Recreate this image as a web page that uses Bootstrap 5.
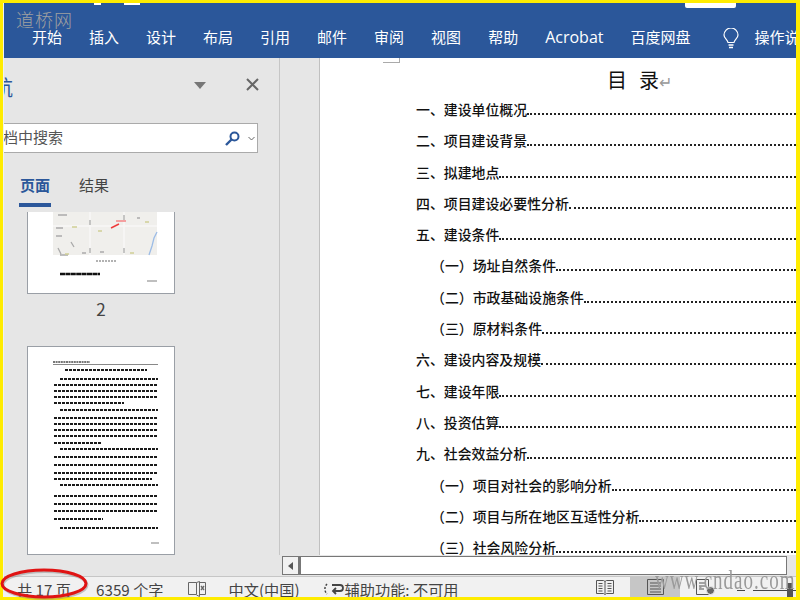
<!DOCTYPE html>
<html lang="zh-CN">
<head>
<meta charset="utf-8">
<title>目录</title>
<link href="https://cdn.jsdelivr.net/npm/bootstrap@5.3.0/dist/css/bootstrap.min.css" rel="stylesheet">
<style>
html,body{height:100%;margin:0;overflow:hidden}
body{background:#ffec00;font-family:"Noto Sans CJK SC","Liberation Sans",sans-serif;color:#444}
.shell{width:800px;height:600px;padding:3px 4px 3px 3px;position:relative;overflow:hidden}
.window{height:594px;width:793px;border-left:1px solid #f1f1f1;background:#e6e6e6}
.ribbon{height:55px;background:#2b579a;position:relative;flex:none}
.tabsrow{height:55px;padding:22px 0 0 28px;gap:27px;color:#fff;font-size:15px;line-height:24px;white-space:nowrap;overflow:hidden}
.tabsrow .latin{font-family:"Open Sans",sans-serif;font-size:16px}
.tellme{margin-left:6px;gap:15px}
.tellme svg{margin-top:3px}
.qmark{position:absolute;background:#fff;top:0}
.q1{left:90px;width:7px;height:2px}
.q2{left:120px;width:16px;height:2px}
.q3{left:681px;width:51px;height:5px;border-radius:0 0 2px 2px}
.workarea{height:497px;flex:none}
.navpane{width:276px;flex:none;border-right:1px solid #c6c6c6;overflow:hidden;background:#e6e6e6}
.panehead{height:47px;padding:13px 0 0 0}
.panetitle{font-size:21px;line-height:30px;color:#2b579a;margin-left:-33px;white-space:nowrap}
.panetools{margin-left:auto;gap:40px;padding:7px 20px 0 0}
.arrowdn{width:0;height:0;border-left:6px solid transparent;border-right:6px solid transparent;border-top:7px solid #777;margin-top:4px}
.searchbar{height:30px;width:254px;margin-top:18px;background:#fff;border:1px solid #aaa;border-left:0;font-size:15px;line-height:28px;overflow:hidden;color:#555;padding-right:1px}
.searchbar span{margin-left:-16px;margin-top:-2px;white-space:nowrap}
.searchicons{margin-left:auto;gap:8px;padding-right:1px}
.panetabs{height:59px;padding:21px 0 0 15px;font-size:15px;line-height:22px;gap:27px}
.ptab{height:33px;width:32px;text-align:center}
.ptab.on{color:#2b579a;font-weight:700;border-bottom:4px solid #2b579a}
.thumbs{height:343px;overflow:hidden;padding-left:23px}
.thumbbox{display:block;background:#fff;border:1px solid #9a9fa6;box-sizing:content-box;filter:blur(.35px)}
.t1{height:81px;border-top:0;width:146px}
.t2{height:207px;width:146px;margin-top:26px}
.pnum{width:148px;text-align:center;font-size:17px;line-height:22px;margin-top:4px;color:#444}
.gutter{width:39px;flex:none;background:#e6e6e6}
.docpane{flex:1;min-width:0;background:#fff;border-left:1px solid #c0c0c0;position:relative;overflow:hidden}
.cropv{position:absolute;left:79px;top:0;width:1px;height:5px;background:#aaa}
.croph{position:absolute;left:63px;top:4px;width:17px;height:1px;background:#aaa}
.doctitle{font-size:20px;font-weight:400;line-height:28px;color:#111;padding:8px 0 0 287px;height:36px;white-space:nowrap;margin-bottom:0}
.doctitle b{font-weight:400;margin-right:12px}
.doctitle i{font-style:normal;color:#999;font-size:16px}
.toc{list-style:none;margin:0;padding:0 0 0 96px}
.toc li{height:31.3px;font-size:13.9px;line-height:20px;color:#111;font-weight:500;white-space:nowrap;padding-top:5px;display:flex}
.toc li.sub{padding-left:15px}
.leader{flex:1;border-bottom:2px dotted #222;height:16px}
.hscroll{height:21px;flex:none;padding:1px 9px 0 2px;background:#e6e6e6}
.hbar{height:19px;background:#fff;border:1px solid #777;margin-left:276px;display:flex}
.hbtn{width:18px;border-right:3px solid #777;display:flex;align-items:center;justify-content:center;background:#f1f1f1}
.hbtn b{width:0;height:0;border-top:4px solid transparent;border-bottom:4px solid transparent;border-right:5px solid #555}
.statusbar{height:21px;flex:none;background:#f1f1f1;border-top:1px solid #c6c6c6;font-size:15.2px;line-height:20px;color:#444;padding:4px 0 0 13px;white-space:nowrap;overflow:hidden}
.statusbar span{flex:none}
.s2{margin-left:25px}.s3{margin-left:24px}.s4{margin-left:23px}.s5{margin-left:24px}.s6{margin-left:0}
.viewbtns{margin-left:auto;margin-top:-4px;display:flex;height:20px}
.vb{width:50px;display:flex;justify-content:center;align-items:center}
.vb.on{background:#c6c6c6}
.zoomctl{width:66px;position:relative}
.zminus{position:absolute;left:7px;top:13px;width:8px;height:1px;background:#444}
.zline{position:absolute;left:23px;right:0;top:13px;height:1px;background:#444}
.zthumb{position:absolute;left:57px;top:6px;width:6px;height:14px;background:#555}
.mark-cn{position:absolute;left:16px;top:6px;font-size:18px;letter-spacing:1px;line-height:26px;color:#a0a0a0;font-weight:300}
.mark-en{position:absolute;left:655px;top:563px;font-family:"Liberation Serif",serif;font-size:19px;line-height:24px;letter-spacing:1px;color:#9a9a9a;transform-origin:0 0;transform:scaleY(1.45);white-space:nowrap}
.ring{position:absolute;left:0;top:568px}
</style>
</head>
<body>
<div class="shell">
  <div class="window d-flex flex-column">
    <header class="ribbon">
      <div class="qmark q1"></div><div class="qmark q2"></div><div class="qmark q3"></div>
      <nav class="tabsrow d-flex">
        <span>开始</span><span>插入</span><span>设计</span><span>布局</span><span>引用</span><span>邮件</span><span>审阅</span><span>视图</span><span>帮助</span><span class="latin">Acrobat</span><span>百度网盘</span>
        <span class="tellme d-flex">
          <svg width="16" height="21" viewBox="0 0 16 21" fill="none" stroke="#fff" stroke-width="1.2"><path d="M5 14.5C4.5 11.5 1 10.500 1 7a7 7 0 0 1 14 0c0 3.500-3.500 4.500-4 7.500z"/><path d="M5.500 17h5M6 19.500h4" stroke-width="1.600"/></svg>
          <span>操作说明搜索</span>
        </span>
      </nav>
    </header>
    <div class="workarea d-flex">
      <aside class="navpane">
        <div class="panehead d-flex">
          <span class="panetitle">导航</span>
          <div class="panetools d-flex">
            <div class="arrowdn"></div>
            <svg width="13" height="13" viewBox="0 0 13 13" stroke="#666" stroke-width="2"><path d="M1 1l11 11M12 1L1 12"/></svg>
          </div>
        </div>
        <div class="searchbar d-flex align-items-center">
          <span>文档中搜索</span>
          <div class="searchicons d-flex align-items-center">
            <svg width="15" height="15" viewBox="0 0 15 15" fill="none" stroke="#2b579a"><circle cx="9.500" cy="5.500" r="4" stroke-width="2"/><path d="M6.500 8.500L1 14" stroke-width="2.400"/></svg>
            <svg width="7" height="5" viewBox="0 0 7 5" fill="none" stroke="#666"><path d="M.5 1l3 3 3-3"/></svg>
          </div>
        </div>
        <div class="panetabs d-flex">
          <div class="ptab on">页面</div>
          <div class="ptab">结果</div>
        </div>
        <div class="thumbs">
          <svg class="thumbbox t1" viewBox="0 0 146 81">
            <rect x="25" y="0" width="104" height="43" fill="#f0efec"/>
            <path d="M25 14H129M62 0V43M96 0V43" stroke="#f8f8f6" stroke-width="1.500"/>
            <path d="M83 16l8-4" stroke="#ee3b3b" stroke-width="1.500"/>
            <path d="M88 9h10" stroke="#f4a0a0" stroke-width="2"/>
            <path d="M129 20l-3 6-2 8-3 9" stroke="#9cbce6" stroke-width="1.300" fill="none"/>
            <path d="M30 3h9M28 16h7M28 24h6M32 43h8M54 41h4M72 40h4M96 3v5M96 36v5M109 6h3M62 8v5M62 36v5M43 30l3 5M30 36l3 6" stroke="#aaa" stroke-width="1.300"/>
            <path d="M44 15h5M37 42h4M70 19h4M117 10h4M102 41h4" stroke="#cfcf95" stroke-width="1.300"/>
            <path d="M68 49h20" stroke="#999" stroke-width="1.500" stroke-dasharray="2 1"/>
            <path d="M32 62h40" stroke="#111" stroke-width="2.400" stroke-dasharray="5 .4"/>
            <path d="M119 69h10" stroke="#aaa" stroke-width="1.500"/>
          </svg>
          <div class="pnum">2</div>
          <svg class="thumbbox t2" viewBox="0 0 146 207">
            <path d="M25 15H62" stroke="#777" stroke-width="2" stroke-dasharray="2 .6"/>
            <path d="M25 17.500H130" stroke="#888" stroke-width="1"/>
            <g stroke="#1a1a1a" stroke-width="2.200" stroke-dasharray="3 1">
              <path d="M37 23H119M32 32H130M26 38H130M26 44H130M26 50H130M26 56H96M32 63H130M26 71H130M26 77H130M26 83H130M26 89H130M26 96H74"/>
              <path d="M32 102H130M26 110H130M26 118H130M26 126H130M26 132H124M32 138H130M26 149H130M26 157H130M26 164H130M26 172H75M32 181H130"/>
            </g>
            <path d="M123 196h8" stroke="#aaa" stroke-width="1.500"/>
          </svg>
        </div>
      </aside>
      <div class="gutter"></div>
      <main class="docpane">
        <div class="cropv"></div><div class="croph"></div>
        <h1 class="doctitle"><b>目</b>录<i>↵</i></h1>
        <ul class="toc">
          <li><span>一、建设单位概况</span><div class="leader"></div></li>
          <li><span>二、项目建设背景</span><div class="leader"></div></li>
          <li><span>三、拟建地点</span><div class="leader"></div></li>
          <li><span>四、项目建设必要性分析</span><div class="leader"></div></li>
          <li><span>五、建设条件</span><div class="leader"></div></li>
          <li class="sub"><span>（一）场址自然条件</span><div class="leader"></div></li>
          <li class="sub"><span>（二）市政基础设施条件</span><div class="leader"></div></li>
          <li class="sub"><span>（三）原材料条件</span><div class="leader"></div></li>
          <li><span>六、建设内容及规模</span><div class="leader"></div></li>
          <li><span>七、建设年限</span><div class="leader"></div></li>
          <li><span>八、投资估算</span><div class="leader"></div></li>
          <li><span>九、社会效益分析</span><div class="leader"></div></li>
          <li class="sub"><span>（一）项目对社会的影响分析</span><div class="leader"></div></li>
          <li class="sub"><span>（二）项目与所在地区互适性分析</span><div class="leader"></div></li>
          <li class="sub"><span>（三）社会风险分析</span><div class="leader"></div></li>
        </ul>
      </main>
    </div>
    <div class="hscroll"><div class="hbar"><div class="hbtn"><b></b></div></div></div>
    <footer class="statusbar d-flex align-items-center">
      <span>共 17 页</span>
      <span class="s2">6359 个字</span>
      <span class="s3 d-flex"><svg width="18" height="17" viewBox="0 0 18 17" fill="none" stroke="#666"><path d="M8.500 1.500h-8v12h8zM8.500 1.500l3-1v15l-3-1.500M11.500 1.500h6v12h-6"/><path d="M13 5l3 4M16 5l-3 4" stroke-width="1.300"/></svg></span>
      <span class="s4">中文(中国)</span>
      <span class="s5 d-flex"><svg width="21" height="17" viewBox="0 0 21 17" fill="none" stroke="#444" stroke-width="1.500"><path d="M3 3a7 7 0 0 0 0 10" stroke-dasharray="2 1.500"/><path d="M8 4h8a3 3 0 0 1 0 6h-6M12 13l-3-3 3-3" stroke-width="1.800"/></svg></span>
      <span class="s6">辅助功能: 不可用</span>
      <div class="viewbtns">
        <div class="vb"><svg width="18" height="15" viewBox="0 0 18 15" fill="none" stroke="#555"><path d="M.5.500h7l1.500 1 1.500-1h7v13h-7l-1.500 1-1.500-1h-7zM9 1.500v12M2.500 3.500h4M2.500 6h4M2.500 8.500h4M2.500 11h4M11.500 3.500h4M11.500 6h4M11.500 8.500h4M11.500 11h4"/></svg></div>
        <div class="vb on"><svg width="17" height="16" viewBox="0 0 17 16" fill="none" stroke="#555"><path d="M.5.500h16v15h-16zM3 4h11M3 7h11M3 10h11M3 13h11"/></svg></div>
        <div class="vb"><svg width="19" height="16" viewBox="0 0 19 16" fill="none" stroke="#555"><path d="M.5.500h12v15h-12zM3 4h7M3 7h7M3 10h5"/><circle cx="14.500" cy="11.500" r="4" fill="#666" stroke="#f1f1f1"/></svg></div>
        <div class="zoomctl"><div class="zminus"></div><div class="zline"></div><div class="zthumb"></div></div>
      </div>
    </footer>
  </div>
  <div class="mark-cn">道桥网</div>
  <div class="mark-en">www.cndao.com</div>
  <svg class="ring" width="96" height="32" viewBox="0 0 96 32" fill="none">
    <ellipse cx="45" cy="17" rx="42" ry="13.500" stroke="#888" stroke-width="3" opacity=".45"/>
    <ellipse cx="44" cy="15.500" rx="42" ry="13.500" stroke="#e01414" stroke-width="3"/>
  </svg>
</div>
<script src="https://cdn.jsdelivr.net/npm/bootstrap@5.3.0/dist/js/bootstrap.bundle.min.js"></script>
</body>
</html>
